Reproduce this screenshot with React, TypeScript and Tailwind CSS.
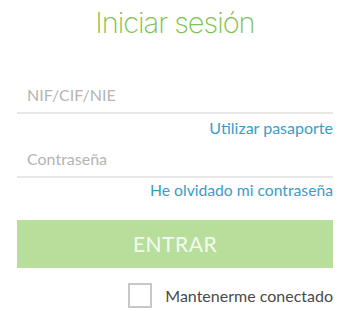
export default function App() {
  return (
    <div
      className="w-[350px] h-[318px] bg-white px-[17px] overflow-hidden"
      style={{ fontFamily: 'Lato, "Open Sans", sans-serif' }}
    >
      <h1
        className="pt-[3px] h-[77px] text-center text-[29px] leading-[40px] font-extralight tracking-[-0.035em] text-[#7cc24e]"
        style={{ fontFamily: 'Inter, Lato, sans-serif' }}
      >
        Iniciar sesión
      </h1>
      <form className="flex flex-col">
        <input
          type="text"
          placeholder="NIF/CIF/NIE"
          className="h-[37px] w-full border-b-2 border-[#e8e8e8] pl-[10px] text-[16px] outline-none placeholder:text-[#b4b4b4]"
        />
        <a href="#" className="self-end h-[27px] leading-[27px] text-[16px] text-[#3a9cc6]">
          Utilizar pasaporte
        </a>
        <input
          type="password"
          placeholder="Contraseña"
          className="h-[37px] w-full border-b-2 border-[#e8e8e8] pl-[10px] text-[16px] outline-none placeholder:text-[#b4b4b4]"
        />
        <a href="#" className="self-end h-[24px] leading-[24px] text-[15.7px] text-[#3a9cc6]">
          He olvidado mi contraseña
        </a>
        <button
          type="button"
          className="mt-[18px] h-[48px] w-full bg-[#b8de9c] text-[21px] text-[#f4fbef] tracking-wide"
        >
          ENTRAR
        </button>
        <label className="mt-[15px] self-end flex items-center gap-[13px] text-[16px] text-[#4a4a4a]">
          <span className="w-[24px] h-[25px] border-2 border-[#c8c8c8] bg-white" />
          Mantenerme conectado
        </label>
      </form>
    </div>
  );
}
